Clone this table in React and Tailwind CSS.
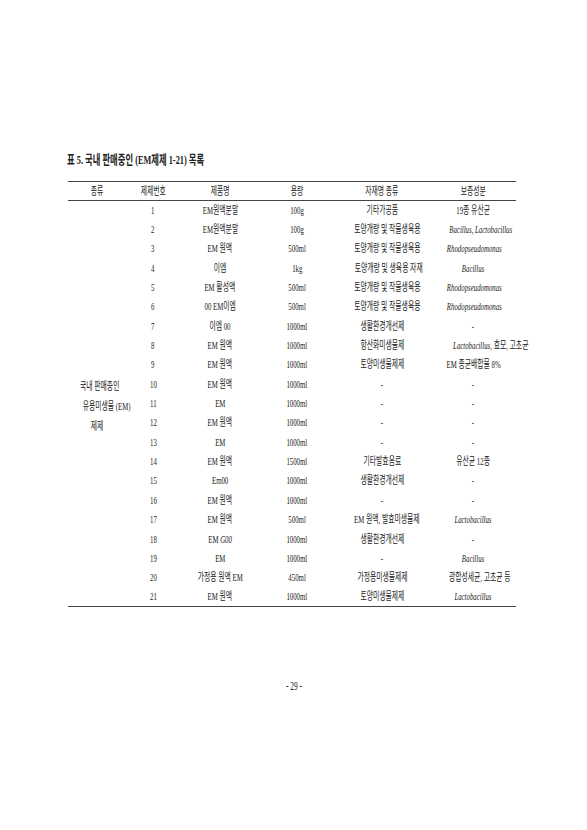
import React from "react";

const rows = [
  ["1", "EM원액분말", "100g", "기타가공품", "19종 유산균"],
  ["2", "EM원액분말", "100g", "토양개량 및 작물생육용", <i key="a">Bacillus, Lactobacillus</i>],
  ["3", "EM 원액", "500ml", "토양개량 및 작물생육용", <i key="a">Rhodopseudomonas</i>],
  ["4", "이엠", "1kg", "토양개량 및 생육용 자재", <i key="a">Bacillus</i>],
  ["5", "EM 활성액", "500ml", "토양개량 및 작물생육용", <i key="a">Rhodopseudomonas</i>],
  ["6", "00 EM이엠", "500ml", "토양개량 및 작물생육용", <i key="a">Rhodopseudomonas</i>],
  ["7", "이엠 00", "1000ml", "생활환경개선제", "-"],
  ["8", "EM 원액", "1000ml", "항산화미생물제", <span key="a"><i>Lactobacillus</i>, 효모, 고초균</span>],
  ["9", "EM 원액", "1000ml", "토양미생물제제", "EM 종균배합물 8%"],
  ["10", "EM 원액", "1000ml", "-", "-"],
  ["11", "EM", "1000ml", "-", "-"],
  ["12", "EM 원액", "1000ml", "-", "-"],
  ["13", "EM", "1000ml", "-", "-"],
  ["14", "EM 원액", "1500ml", "기타발효음료", "유산균 12종"],
  ["15", "Em00", "1000ml", "생활환경개선제", "-"],
  ["16", "EM 원액", "1000ml", "-", "-"],
  ["17", "EM 원액", "500ml", "EM 원액, 발효미생물제", <i key="a">Lactobacillus</i>],
  ["18", <span key="a">EM <i>G00</i></span>, "1000ml", "생활환경개선제", "-"],
  ["19", "EM", "1000ml", "-", <i key="a">Bacillus</i>],
  ["20", "가정용 원액 EM", "450ml", "가정용미생물제제", "광합성세균, 고초균 등"],
  ["21", "EM 원액", "1000ml", "토양미생물제제", <i key="a">Lactobacillus</i>],
];

const font = { fontFamily: '"Liberation Serif", "Noto Sans CJK KR", serif' };

// condensed text, like the document's narrow myeongjo
const Txt = ({ children }) => (
  <span className="inline-block whitespace-nowrap scale-x-[0.62] origin-center">
    {children}
  </span>
);

export default function App() {
  return (
    <div className="w-[587px] h-[830px] bg-white text-[#222] relative" style={font}>
      <div className="pt-[152px] pl-[67px] text-[13px] leading-[16px]">
        <span className="inline-block whitespace-nowrap scale-x-[0.64] origin-left font-bold">
          표 5. 국내 판매중인 (EM제제 1-21) 목록
        </span>
      </div>

      <table className="ml-[68px] mt-[13px] w-[448px] table-fixed border-collapse text-[11px] leading-none">
        <colgroup>
          <col className="w-[58px]" />
          <col className="w-[54px]" />
          <col className="w-[80px]" />
          <col className="w-[74px]" />
          <col className="w-[96px]" />
          <col className="w-[86px]" />
        </colgroup>
        <thead>
          <tr className="h-[19px] border-t-[1.5px] border-b border-[#444]">
            {["종류", "제제번호", "제품명", "용량", "자재명 종류", "보증성분"].map((h) => (
              <th key={h} className="font-normal text-center p-0">
                <Txt>{h}</Txt>
              </th>
            ))}
          </tr>
        </thead>
        <tbody className="border-b-[1.5px] border-[#444]">
          {rows.map((r, i) => (
            <tr key={i} className="h-[19.35px]">
              {i === 0 && (
                <td rowSpan={21} className="text-center align-middle p-0 leading-[20px] pt-[4px]">
                  <div><Txt>국내 판매중인</Txt></div>
                  <div><Txt>유용미생물 (EM)</Txt></div>
                  <div><Txt>제제</Txt></div>
                </td>
              )}
              {r.map((c, j) => (
                <td key={j} className="text-center p-0">
                  <Txt>{c}</Txt>
                </td>
              ))}
            </tr>
          ))}
        </tbody>
      </table>

      <div className="absolute left-0 right-0 top-[679px] text-center text-[12px] leading-[14px]">
        <Txt>- 29 -</Txt>
      </div>
    </div>
  );
}
